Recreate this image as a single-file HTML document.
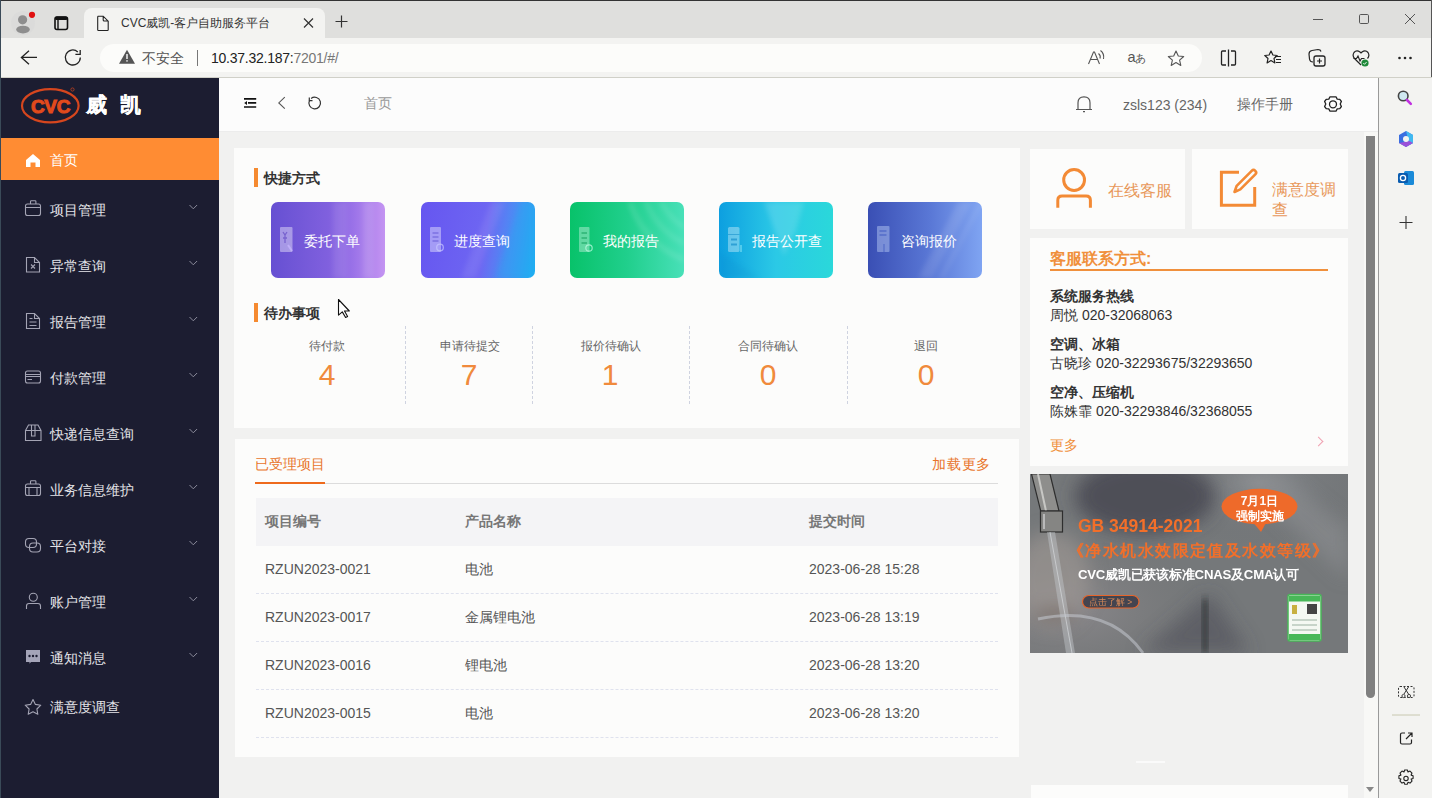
<!DOCTYPE html>
<html><head><meta charset="utf-8">
<style>
*{box-sizing:border-box;margin:0;padding:0}
html,body{width:1432px;height:798px;overflow:hidden;background:#f1f1f0;font-family:"Liberation Sans",sans-serif;color:#333}
.a{position:absolute}
#chrome{left:0;top:0;width:1432px;height:78px;background:#dfdfdd}
#toolbar{left:0;top:38px;width:1432px;height:40px;background:#f3f3f1}
#tab{left:84px;top:8px;width:241px;height:34px;background:#f3f3f1;border-radius:8px 8px 0 0}
#pill{left:100px;top:43.5px;width:1102px;height:28.5px;background:#fcfcfa;border-radius:14px}
#side{left:0;top:78px;width:219px;height:720px;background:#1c1d31}
#head{left:219px;top:78px;width:1159px;height:54px;background:#fcfcfc}
#bsb{left:1378px;top:78px;width:54px;height:720px;background:#f3f3f1;border-left:1px solid #9a9a9a}
.card{background:#fcfcfb}
.mi{left:0;width:219px;height:56px;color:#e4e4e8;font-size:14px}
.mi span.t{position:absolute;left:50px;top:50%;margin-top:-6px;line-height:16px}
.mi .chev{position:absolute;left:189px;top:50%;margin-top:-4px;width:7px;height:7px;border-right:1px solid #8a8a9a;border-bottom:1px solid #8a8a9a;transform:rotate(45deg)}
.btn{top:202px;width:114px;height:76px;border-radius:7px;color:#fff;font-size:14px;overflow:hidden}
.btn svg{position:absolute;left:8px;top:24px}
.btn svg.ov{left:0;top:0;filter:blur(2.5px)}
.btn span{position:absolute;left:33px;top:31px;line-height:16px;letter-spacing:0}
.todo .lb{position:absolute;top:338px;font-size:12px;color:#666;line-height:16px;transform:translateX(-50%);white-space:nowrap}
.todo .num{position:absolute;top:358px;font-size:30px;color:#f08a3c;line-height:34px;transform:translateX(-50%)}
.dash{top:326px;height:78px;width:0;border-left:1px dashed #cfd3e0}
.row{left:256px;width:742px;height:48px;font-size:14px;color:#555;border-bottom:1px dashed #dfe2ee}
.row span{position:absolute;top:15px;line-height:16px}
.ct{left:1050px;font-size:14px;line-height:16px}
</style></head><body>
<!-- browser chrome -->
<div id="chrome" class="a"></div>
<div id="toolbar" class="a"></div>
<div id="tab" class="a"></div>

<div id="pill" class="a"></div>
<svg class="a" style="left:0;top:0" width="1432" height="78" viewBox="0 0 1432 78">
 <rect x="0" y="0" width="1432" height="1" fill="#333"/>
 <rect x="1431" y="0" width="1" height="78" fill="#555"/>
 <circle cx="23" cy="23" r="12" fill="#d8d8d8" opacity=".6"/>
 <circle cx="22.6" cy="19.8" r="4.6" fill="#8e8e8e"/>
 <ellipse cx="23" cy="29.6" rx="6.8" ry="3.9" fill="#8e8e8e"/>
 <circle cx="32" cy="14.8" r="3.1" fill="#e01010"/>
 <rect x="55" y="17" width="12.5" height="12.5" rx="2" fill="none" stroke="#111" stroke-width="1.6"/>
 <rect x="55" y="16.5" width="12.5" height="3.5" rx="1.5" fill="#111"/>
 <line x1="58" y1="19" x2="58" y2="29.5" stroke="#111" stroke-width="1.4"/>
 <path d="M97.7 16.2h5.5l5 5v8.5q0 .8-.8.8h-8.9q-.8 0-.8-.8v-12.7q0-.8 .8-.8z M103.2 16.2v3.8q0 1 1 1h4" fill="none" stroke="#222" stroke-width="1.1"/>
 <path d="M304 18.5l9 9m0-9l-9 9" stroke="#333" stroke-width="1.2"/>
 <path d="M341.5 15.5v12m-6-6h12" stroke="#333" stroke-width="1.2"/>
 <path d="M1313 19.5h10" stroke="#555" stroke-width="1"/>
 <rect x="1359.5" y="14.5" width="9" height="9" rx="1.2" fill="none" stroke="#555" stroke-width="1"/>
 <path d="M1405 14l10 10m0-10l-10 10" stroke="#555" stroke-width="1"/>
 <path d="M29 50.8l-7.6 6.6 7.6 6.8M21.5 57.4h15.5" fill="none" stroke="#222" stroke-width="1.3"/>
 <path d="M80.3 57.5a7.5 7.5 0 1 1-2.5-5.6" fill="none" stroke="#222" stroke-width="1.3"/>
 <path d="M80.2 50v4.4h-4.8" fill="none" stroke="#222" stroke-width="1.3"/>
 <path d="M127 49.8l8 14h-16z" fill="#555"/>
 <rect x="126.3" y="54" width="1.4" height="5" fill="#fff"/><rect x="126.3" y="60.2" width="1.4" height="1.4" fill="#fff"/>
 <path d="M1088.5 64l5-12h1l5 12M1090.5 59.5h7" fill="none" stroke="#555" stroke-width="1.1"/>
 <path d="M1098.5 53.5q2.5 2 1.5 5M1100.5 50.5q4 3 3 8.5" fill="none" stroke="#555" stroke-width="1.1"/>
 <text x="1127.5" y="62.3" font-size="14.5" fill="#555" font-family="Liberation Sans">a</text>
 <text x="1134.5" y="62" font-size="11" fill="#555">あ</text>
 <path d="M1176 51l2.3 5 5.4.5-4.1 3.6 1.2 5.3-4.8-2.8-4.8 2.8 1.2-5.3-4.1-3.6 5.4-.5z" fill="none" stroke="#555" stroke-width="1.1" stroke-linejoin="round"/>
 <path d="M1226 51h-3.5q-1 0-1 1v12q0 1 1 1h3.5M1231 51h3.5q1 0 1 1v12q0 1-1 1h-3.5M1228.5 49.5v17" fill="none" stroke="#222" stroke-width="1.3"/>
 <path d="M1271 51l1.9 4 4.3.5-3.2 3 .9 4.4-3.9-2.3-3.9 2.3.9-4.4-3.2-3 4.3-.5z" fill="none" stroke="#222" stroke-width="1.2" stroke-linejoin="round"/>
 <path d="M1275 56.5h6M1276 59.5h5M1276 62.5h5" stroke="#222" stroke-width="1.2"/>
 <path d="M1313 62q-3 0-3.5-3l-.5-5q0-3 3-3.5l6-1q2.5 0 3 2" fill="none" stroke="#222" stroke-width="1.2"/>
 <rect x="1314" y="56" width="11" height="10" rx="2" fill="#f3f3f1" stroke="#222" stroke-width="1.3"/>
 <path d="M1319.5 58.5v5m-2.5-2.5h5" stroke="#222" stroke-width="1.2"/>
 <path d="M1361 65l-6.5-6.5q-2.5-3 -.5-6 2.5-3 6-.5l1 1 1-1q3.5-2.5 6 .5 2 3-.5 6" fill="none" stroke="#222" stroke-width="1.2"/>
 <path d="M1353.5 58.5h3l1.5-2.5 2 5 1.5-2.5h3" fill="none" stroke="#222" stroke-width="1.1"/>
 <circle cx="1365" cy="63" r="3.6" fill="#1f8a3a"/>
 <path d="M1363.3 63.1l1.2 1.2 2.1-2.3" fill="none" stroke="#fff" stroke-width=".9"/>
 <circle cx="1399.5" cy="58" r="1.3" fill="#222"/><circle cx="1405" cy="58" r="1.3" fill="#222"/><circle cx="1410.5" cy="58" r="1.3" fill="#222"/>
</svg>
<div class="a" style="left:96px;top:15px;font-size:12px;color:#333;left:121px;top:16px;line-height:14px">CVC威凯-客户自助服务平台</div>
<div class="a" style="left:142px;top:50px;font-size:14px;color:#555;line-height:16px">不安全</div>
<div class="a" style="left:197px;top:50px;width:1px;height:16px;background:#777"></div>
<div class="a" style="left:211px;top:50px;font-size:14px;color:#222;line-height:16px;letter-spacing:-.25px">10.37.32.187:<span style="color:#777">7201/#/</span></div>

<!-- sidebar -->
<div class="a" style="left:0;top:77px;width:1432px;height:1px;background:#d0d0c8"></div>
<div id="side" class="a"></div>
<div class="a" style="left:0;top:138px;width:219px;height:42px;background:#ff8c33"></div>
<svg class="a" style="left:0;top:78px" width="219" height="720" viewBox="0 78 219 720">
 <ellipse cx="50.3" cy="105.8" rx="28.3" ry="16.6" fill="none" stroke="#d6461e" stroke-width="2.2"/>
 <text x="50.5" y="112.6" font-family="Liberation Sans" font-weight="bold" font-size="19" fill="#e24a1c" stroke="#e24a1c" stroke-width="1" text-anchor="middle" letter-spacing="-0.3">CVC</text>
 <circle cx="72.5" cy="89.5" r="1.6" fill="none" stroke="#d6461e" stroke-width=".7"/>
 <g fill="#fff">
 <path d="M33 154l7 6v7h-4.5v-4.5h-5v4.5H26v-7z"/>
 </g>
 <g fill="none" stroke="#a4a4b4" stroke-width="1.1">
  <rect x="25.5" y="204" width="15" height="11.5" rx="2"/>
  <path d="M25.5 207.5h15M30.5 204v-2.5q0-.8.8-.8h3.8q.8 0 .8.8v2.5"/>
  <path d="M26.5 257.5h8l5 5v9.5h-13z M34.5 257.5v5h5"/>
  <path d="M31 264.5l4 4m0-4l-4 4"/>
  <path d="M26.5 313.5h8l5 5v10h-13z M34.5 313.5v5h5 M29.5 318.5h3 M29.5 322h7 M29.5 325.5h7"/>
  <rect x="25.5" y="371" width="15" height="12" rx="2"/>
  <path d="M25.5 374.5h15M25.5 376.5h15M27.5 379.5h4.5"/>
  <path d="M25.5 430.5l3-5.5h9.5l3 5.5v10h-15.5z M25.5 430.5h15.5 M31.5 425v11h3.5v-11"/>
  <rect x="25.5" y="204" width="15" height="11.5" rx="2" transform="translate(0,280)"/>
  <path d="M30.5 484v-2.5q0-.8.8-.8h3.8q.8 0 .8.8v2.5M25.5 487.5h15M29 487.5v8M37 487.5v8"/>
  <rect x="25.5" y="538.5" width="11" height="9" rx="3.5"/>
  <rect x="29.5" y="543" width="11" height="9" rx="3.5"/>
  <circle cx="33.3" cy="597.3" r="4"/>
  <path d="M26.5 609v-3q0-2.5 2.5-2.5h9q2.5 0 2.5 2.5v3"/>
  <path d="M33 699.5l2.4 4.9 5.4.8-3.9 3.8.9 5.3-4.8-2.5-4.8 2.5.9-5.3-3.9-3.8 5.4-.8z" stroke-linejoin="round"/>
 </g>
 <path d="M26 650h14v12h-9l-1.5 1.8v-1.8H26z" fill="#a4a4b8"/>
 <circle cx="29.5" cy="656" r="1.2" fill="#1c1d31"/><circle cx="33" cy="656" r="1.2" fill="#1c1d31"/><circle cx="36.5" cy="656" r="1.2" fill="#1c1d31"/>
</svg>
<div class="a" style="left:86px;top:93px;font-size:21px;font-weight:bold;color:#fff;line-height:24px;letter-spacing:13px;-webkit-text-stroke:.25px #fff">威凯</div>

<div class="a mi" style="top:138px;height:42px;color:#fff"><span class="t" style="margin-top:-7px">首页</span></div>
<div class="a mi" style="top:180px"><span class="t">项目管理</span></div>
<div class="a mi" style="top:236px"><span class="t">异常查询</span></div>
<div class="a mi" style="top:292px"><span class="t">报告管理</span></div>
<div class="a mi" style="top:348px"><span class="t">付款管理</span></div>
<div class="a mi" style="top:404px"><span class="t">快递信息查询</span></div>
<div class="a mi" style="top:460px"><span class="t">业务信息维护</span></div>
<div class="a mi" style="top:516px"><span class="t">平台对接</span></div>
<div class="a mi" style="top:572px"><span class="t">账户管理</span></div>
<div class="a mi" style="top:628px"><span class="t">通知消息</span></div>
<div class="a mi" style="top:684px;height:42px"><span class="t" style="margin-top:-6px">满意度调查</span></div>

<svg class="a" style="left:0;top:0" width="219" height="798" viewBox="0 0 219 798"><g fill="none" stroke="#8c8c9c" stroke-width="1"><path d="M189.5 205.0l3.8 3.8 3.8-3.8"/><path d="M189.5 261.0l3.8 3.8 3.8-3.8"/><path d="M189.5 317.0l3.8 3.8 3.8-3.8"/><path d="M189.5 373.0l3.8 3.8 3.8-3.8"/><path d="M189.5 429.0l3.8 3.8 3.8-3.8"/><path d="M189.5 485.0l3.8 3.8 3.8-3.8"/><path d="M189.5 541.0l3.8 3.8 3.8-3.8"/><path d="M189.5 597.0l3.8 3.8 3.8-3.8"/><path d="M189.5 653.0l3.8 3.8 3.8-3.8"/></g></svg>
<!-- header -->
<div id="head" class="a"></div>
<div class="a" style="left:364px;top:95px;font-size:14px;color:#999;line-height:16px">首页</div>
<div class="a" style="left:1123px;top:97px;font-size:14px;color:#666;line-height:16px">zsls123 (234)</div>
<div class="a" style="left:1237px;top:96px;font-size:14px;color:#666;line-height:16px">操作手册</div>

<svg class="a" style="left:219px;top:78px" width="1159" height="54" viewBox="219 78 1159 54">
 <path d="M244 98.8h12.2M248 102.9h8.2M244 107h12.2" stroke="#111" stroke-width="1.7"/>
 <path d="M247 100.9v4l-2.8-2z" fill="#111"/>
 <path d="M284.8 97.2l-6 5.7 6 5.7" fill="none" stroke="#555" stroke-width="1.1"/>
 <path d="M309.6 100.3a5.8 5.8 0 1 0 1.5-1.8" fill="none" stroke="#333" stroke-width="1.2"/>
 <path d="M309.3 97.5v3.2h3.2" fill="none" stroke="#333" stroke-width="1.2"/>
 <path d="M1078 109.3v-6.5q0-6 6-6t6 6v6.5M1076 109.5h16M1083 111.6h2" fill="none" stroke="#555" stroke-width="1.2"/>
 <path d="M1330 96.8h6l1.2 2.3 2.6.2 1.6 2.2-1.2 2.5 1.2 2.5-1.6 2.2-2.6.2-1.2 2.3h-6l-1.2-2.3-2.6-.2-1.6-2.2 1.2-2.5-1.2-2.5 1.6-2.2 2.6-.2z" fill="none" stroke="#222" stroke-width="1.3" stroke-linejoin="round"/>
 <circle cx="1333" cy="104.3" r="3.5" fill="none" stroke="#222" stroke-width="1.3"/>
 <rect x="219" y="131.5" width="1159" height="1" fill="#dcdcdc"/>
</svg>
<div id="bsb" class="a"></div>

<!-- top-left card -->
<div class="a card" style="left:234px;top:148px;width:786px;height:280px"></div>
<div class="a" style="left:254px;top:168px;width:4px;height:19px;background:#f58a30"></div>
<div class="a" style="left:264px;top:170px;font-size:14px;font-weight:bold;color:#333;line-height:16px">快捷方式</div>
<div class="a btn" style="left:271px;background:linear-gradient(90deg,#6650d2 0%,#8060de 50%,#9a72e8 72%,#c494f2 100%)"><svg class="ov" width="114" height="76"><rect x="62" y="0" width="14" height="76" fill="#fff" opacity=".07"/><rect x="92" y="0" width="10" height="76" fill="#fff" opacity=".1"/></svg><svg width="16" height="30" viewBox="0 0 16 30"><rect x="1" y="1" width="12.5" height="25" rx="1" fill="#fff" opacity=".4"/><path d="M4 6l2 3 2-3M6 9v8M4 12h4" stroke="#5a40c0" stroke-width="1.3" fill="none" opacity=".6"/><path d="M9 19l4 6" stroke="#c9b8ff" stroke-width="2" opacity=".7"/></svg><span>委托下单</span></div>
<div class="a btn" style="left:421px;background:linear-gradient(100deg,#6656f0 0%,#6e66f2 55%,#4a8ef4 76%,#1eb0f2 100%)"><svg class="ov" width="114" height="76"><path d="M70 0h14l-30 76h-14z" fill="#fff" opacity=".08"/><path d="M100 0h14v76h-40z" fill="#18b0f0" opacity=".25"/></svg><svg width="16" height="30" viewBox="0 0 16 30"><rect x="1" y="1" width="11" height="25" rx="1" fill="#fff" opacity=".4"/><path d="M3.5 7h6M3.5 11h6M3.5 15h6" stroke="#5548d0" stroke-width="1.4" opacity=".5"/><circle cx="11" cy="21.5" r="3.3" fill="none" stroke="#c8c8ff" stroke-width="1.3" opacity=".7"/></svg><span>进度查询</span></div>
<div class="a btn" style="left:570px;background:linear-gradient(90deg,#08c26a,#20cf8c 50%,#48e0b8)"><svg class="ov" width="114" height="76"><g fill="none" stroke="#fff"><circle cx="150" cy="-30" r="95" stroke-width="5" opacity=".12"/><circle cx="150" cy="-30" r="80" stroke-width="4" opacity=".12"/><circle cx="150" cy="-30" r="66" stroke-width="4" opacity=".12"/></g></svg><svg width="16" height="30" viewBox="0 0 16 30"><rect x="1" y="1" width="10.5" height="25" rx="1" fill="#fff" opacity=".35"/><path d="M3.5 7h5.5M3.5 12h5.5M3.5 17h5.5" stroke="#0a9a55" stroke-width="1.6" opacity=".6"/><circle cx="11" cy="22" r="3.2" fill="none" stroke="#c8ffe8" stroke-width="1.2" opacity=".7"/></svg><span>我的报告</span></div>
<div class="a btn" style="left:719px;background:linear-gradient(90deg,#0d9fe0,#2bc9e6 50%,#2ad8da)"><svg class="ov" width="114" height="76"><path d="M45 0h40l-8 28-12 26z" fill="#fff" opacity=".14"/><path d="M0 50l40 26h-40z" fill="#0a80c0" opacity=".15"/></svg><svg width="16" height="30" viewBox="0 0 16 30"><rect x="1" y="1" width="11.5" height="25" rx="1.5" fill="#fff" opacity=".35"/><path d="M4 13.5h6M4 18.5h6" stroke="#0a88c8" stroke-width="1.8" opacity=".6"/><path d="M1 8.5h11.5" stroke="#0a88c8" stroke-width="1" opacity=".5"/><path d="M14 19v7" stroke="#bff" stroke-width="1" opacity=".7"/></svg><span>报告公开查</span></div>
<div class="a btn" style="left:868px;background:linear-gradient(90deg,#3a4fb4,#5a78d6 55%,#7fa4f2)"><svg class="ov" width="114" height="76"><path d="M50 76l40-76h14l-40 76z" fill="#fff" opacity=".1"/><path d="M70 76l40-76h6l-40 76z" fill="#fff" opacity=".08"/></svg><svg width="16" height="30" viewBox="0 0 16 30"><rect x="1" y="0" width="12.5" height="26" rx="1" fill="#cfe0ff" opacity=".4"/><path d="M3.5 5h7M3.5 9h7" stroke="#3a55c0" stroke-width="1.4" opacity=".6"/><path d="M8 18v8" stroke="#3a55c0" stroke-width="1.2" opacity=".6"/></svg><span>咨询报价</span></div>
<div class="a" style="left:254px;top:303px;width:4px;height:19px;background:#f58a30"></div>
<div class="a" style="left:264px;top:305px;font-size:14px;font-weight:bold;color:#333;line-height:16px">待办事项</div>
<svg class="a" style="left:330px;top:292px" width="26" height="30" viewBox="330 292 26 30"><path d="M338.5 299.5v15.6l3.8-3.2 3.3 5.6 2-1-3.1-5.5h4.8z" fill="#fff" stroke="#111" stroke-width="1.1" stroke-linejoin="round"/></svg>
<div class="todo">
<div class="lb" style="left:327px">待付款</div><div class="num" style="left:327px">4</div>
<div class="lb" style="left:470px">申请待提交</div><div class="num" style="left:469px">7</div>
<div class="lb" style="left:611px">报价待确认</div><div class="num" style="left:610px">1</div>
<div class="lb" style="left:768px">合同待确认</div><div class="num" style="left:768px">0</div>
<div class="lb" style="left:926px">退回</div><div class="num" style="left:926px">0</div>
</div>
<div class="a dash" style="left:405px"></div>
<div class="a dash" style="left:532px"></div>
<div class="a dash" style="left:689px"></div>
<div class="a dash" style="left:847px"></div>

<!-- table card -->
<div class="a card" style="left:235px;top:439px;width:784px;height:318px"></div>
<div class="a" style="left:255px;top:456px;font-size:14px;color:#e8742a;line-height:16px">已受理项目</div>
<div class="a" style="left:932px;top:456px;font-size:14px;color:#e8742a;line-height:16px;letter-spacing:.8px">加载更多</div>
<div class="a" style="left:255px;top:483px;width:743px;height:1px;background:#dcdcdc"></div>
<div class="a" style="left:255px;top:482px;width:70px;height:2px;background:#ee6a1c"></div>
<div class="a" style="left:256px;top:498px;width:742px;height:48px;background:#f4f4f6"></div>
<div class="a" style="left:265px;top:513px;font-size:14px;font-weight:bold;color:#777;line-height:16px">项目编号</div>
<div class="a" style="left:465px;top:513px;font-size:14px;font-weight:bold;color:#777;line-height:16px">产品名称</div>
<div class="a" style="left:809px;top:513px;font-size:14px;font-weight:bold;color:#777;line-height:16px">提交时间</div>
<div class="a row" style="top:546px"><span style="left:9px">RZUN2023-0021</span><span style="left:209px">电池</span><span style="left:553px">2023-06-28 15:28</span></div>
<div class="a row" style="top:594px"><span style="left:9px">RZUN2023-0017</span><span style="left:209px">金属锂电池</span><span style="left:553px">2023-06-28 13:19</span></div>
<div class="a row" style="top:642px"><span style="left:9px">RZUN2023-0016</span><span style="left:209px">锂电池</span><span style="left:553px">2023-06-28 13:20</span></div>
<div class="a row" style="top:690px"><span style="left:9px">RZUN2023-0015</span><span style="left:209px">电池</span><span style="left:553px">2023-06-28 13:20</span></div>

<!-- right column -->
<div class="a card" style="left:1030px;top:149px;width:155px;height:80px"></div>
<div class="a card" style="left:1192px;top:149px;width:156px;height:80px"></div>

<svg class="a" style="left:1030px;top:149px" width="318" height="80" viewBox="1030 149 318 80">
 <circle cx="1074.1" cy="180" r="10.4" fill="none" stroke="#f38a35" stroke-width="3"/>
 <path d="M1057.8 207.7v-7.5q0-4.3 4.3-4.3h24q4.3 0 4.3 4.3v7.5" fill="none" stroke="#f38a35" stroke-width="3"/>
 <path d="M1239 172.3h-17.6v33h33.3v-18.3" fill="none" stroke="#f38a35" stroke-width="3"/>
 <path d="M1234.5 192l2.2-6.2 15-15q1.8-1.8 3.6 0t0 3.6l-15 15z" fill="none" stroke="#f38a35" stroke-width="2.6" stroke-linejoin="round"/>
</svg>
<div class="a" style="left:1108px;top:182px;font-size:16px;color:#e8985a;line-height:18px">在线客服</div>
<div class="a" style="left:1272px;top:180px;width:70px;font-size:16px;color:#e8985a;line-height:20px">满意度调查</div>
<div class="a card" style="left:1030px;top:238px;width:318px;height:228px"></div>
<div class="a" style="left:1050px;top:250px;font-size:16px;font-weight:bold;color:#f0903c;line-height:18px">客服联系方式:</div>
<div class="a" style="left:1050px;top:269px;width:278px;height:2px;background:#f0903c"></div>
<div class="a ct" style="top:288px;font-weight:bold">系统服务热线</div>
<div class="a ct" style="top:307px">周悦 020-32068063</div>
<div class="a ct" style="top:336px;font-weight:bold">空调、冰箱</div>
<div class="a ct" style="top:355px">古晓珍 020-32293675/32293650</div>
<div class="a ct" style="top:384px;font-weight:bold">空净、压缩机</div>
<div class="a ct" style="top:403px">陈姝霏 020-32293846/32368055</div>
<div class="a ct" style="top:437px;color:#f0903c">更多</div>
<div class="a" style="left:1315px;top:438px;width:7px;height:7px;border-right:1px solid #f0a0b0;border-top:1px solid #f0a0b0;transform:rotate(45deg)"></div>

<svg class="a" style="left:1030px;top:474px" width="318" height="179" viewBox="0 0 318 179">
 <defs>
  <radialGradient id="g1" cx="0.72" cy="0.05" r="0.35"><stop offset="0" stop-color="#8a8d90"/><stop offset="1" stop-color="#6b6e72" stop-opacity="0"/></radialGradient>
  <radialGradient id="g2" cx="0.12" cy="0.75" r="0.45"><stop offset="0" stop-color="#8c8a8e"/><stop offset="1" stop-color="#777" stop-opacity="0"/></radialGradient>
  <linearGradient id="fa" x1="0" x2="1"><stop offset="0" stop-color="#5a5a58"/><stop offset=".4" stop-color="#cfcfcb"/><stop offset="1" stop-color="#6a6a68"/></linearGradient>
  <filter id="bl"><feGaussianBlur stdDeviation="3"/></filter>
 </defs>
 <rect width="318" height="179" fill="#75787a"/>
 <rect width="318" height="179" fill="url(#g1)"/>
 <rect width="318" height="179" fill="url(#g2)"/>
 <filter id="bl2" x="-50%" y="-50%" width="200%" height="200%"><feGaussianBlur stdDeviation="9"/></filter>
 <g filter="url(#bl2)">
  <ellipse cx="115" cy="22" rx="70" ry="38" fill="#45454f" opacity=".8"/>
  <path d="M205 0h45l68 55v50z" fill="#8e9094" opacity=".55"/>
  <ellipse cx="22" cy="105" rx="38" ry="48" fill="#a09a94" opacity=".6"/>
  <path d="M110 179l70-60 40 60z" fill="#4a4c55" opacity=".55"/>
  <ellipse cx="25" cy="140" rx="22" ry="6" fill="#5a4a40" opacity=".6"/>
 </g>
 <g filter="url(#bl)">
  <rect x="172" y="125" width="6" height="54" fill="#2a2c30" opacity=".7"/>
 </g>
 <path d="M1.5 0H20l9 37H10.7z" fill="#8e8e8c" stroke="#2e2e2e" stroke-width="1.2"/>
 <path d="M8 0l8 37" stroke="#e0e0dc" stroke-width="2" opacity=".7"/>
 <rect x="10.5" y="37" width="22" height="21" fill="#858583" stroke="#2e2e2e" stroke-width="1.2"/>
 <path d="M14 40v15" stroke="#ddd" stroke-width="2" opacity=".6"/>
 <path d="M17 58h8l20 121h-9z" fill="#c4c8cc" opacity=".45"/>
 <path d="M20 58l22 121" stroke="#dde0e4" stroke-width="1" opacity=".6"/>
 <path d="M8 145q70 -15 105 34" fill="none" stroke="#c4c8d0" stroke-width="3" opacity=".55"/>
 <ellipse cx="229.5" cy="32.6" rx="38" ry="17.8" fill="#ee6a2a"/>
 <path d="M222 47l9 11 6-11z" fill="#ee6a2a"/>
 <text x="229.5" y="30.5" font-size="12" font-weight="bold" fill="#fff" text-anchor="middle">7月1日</text>
 <text x="229.5" y="45.5" font-size="12" font-weight="bold" fill="#fff" text-anchor="middle">强制实施</text>
 <text x="48" y="57.5" font-size="17.5" font-weight="bold" fill="#f26f2a" font-family="Liberation Sans">GB 34914-2021</text>
 <text x="38" y="82" font-size="16.4" font-weight="bold" fill="#f26f2a" textLength="260">《净水机水效限定值及水效等级》</text>
 <text x="48" y="104.5" font-size="13.2" font-weight="bold" fill="#fff" textLength="221">CVC威凯已获该标准CNAS及CMA认可</text>
 <rect x="52.5" y="121.5" width="56.5" height="12.5" rx="6.25" fill="#44444f" stroke="#e8652a" stroke-width="1.2"/>
 <text x="80.5" y="131" font-size="8.5" fill="#d88a58" text-anchor="middle">点击了解 &gt;</text>
 <rect x="258" y="120.5" width="33" height="46.5" rx="2" fill="#f4f8f2" stroke="#48b858" stroke-width="1.5"/>
 <rect x="259" y="121.5" width="31" height="6" fill="#48b858"/>
 <rect x="277" y="130" width="10" height="10" fill="#444"/>
 <rect x="262" y="131" width="5" height="9" fill="#c8b040"/>
 <path d="M262 146h25M262 151h25M262 156h25" stroke="#9ab0a0" stroke-width="1"/>
 <rect x="259" y="160" width="31" height="6" fill="#48b858"/>
</svg>

<div class="a card" style="left:1031px;top:785px;width:317px;height:13px"></div>
<div class="a" style="left:1364px;top:132px;width:14px;height:666px;background:#f8f8f6"></div>
<div class="a" style="left:1366px;top:136px;width:9px;height:562px;background:#808080;border-radius:0 0 4.5px 4.5px"></div>

<svg class="a" style="left:1378px;top:78px" width="54" height="720" viewBox="1378 78 54 720">
 <circle cx="1403.2" cy="96" r="4.8" fill="#cfe8f0" stroke="#444" stroke-width="1.6"/>
 <path d="M1407 100l3.8 3.8" stroke="#c030e0" stroke-width="2.6" stroke-linecap="round"/>
 <path d="M1406 131l7 4v8l-7 4-7-4v-8z" fill="#3a6ee0"/>
 <path d="M1406 131l7 4v8l-3.5 2z" fill="#40b8f0"/>
 <path d="M1399 143l7 4 7-4-3.5-2z" fill="#9a50d8"/>
 <circle cx="1406" cy="139" r="3" fill="#f3f3f1"/>
 <rect x="1404" y="171" width="10" height="14" rx="1.5" fill="#1a8ad8"/>
 <rect x="1398" y="173" width="10" height="10" rx="1.5" fill="#0a5cb0"/>
 <circle cx="1403" cy="178" r="2.6" fill="none" stroke="#fff" stroke-width="1.3"/>
 <path d="M1406 216v13M1399.5 222.5h13" stroke="#333" stroke-width="1.1"/>
 <rect x="1398.5" y="686.5" width="15.5" height="11" rx="1.5" fill="none" stroke="#333" stroke-width="1" stroke-dasharray="2 1.5"/>
 <path d="M1404 687l4.5 7M1408.5 687l-4.5 7" stroke="#333" stroke-width="1"/>
 <circle cx="1403.5" cy="696" r="1.6" fill="#f3f3f1" stroke="#333" stroke-width=".9"/><circle cx="1409" cy="696" r="1.6" fill="#f3f3f1" stroke="#333" stroke-width=".9"/>
 <path d="M1392 715h28" stroke="#c8c8b0" stroke-width="1"/>
 <path d="M1405 733h-3q-1.5 0-1.5 1.5v8q0 1.5 1.5 1.5h8q1.5 0 1.5-1.5v-3M1406 739l6-6M1408 733h4v4" fill="none" stroke="#222" stroke-width="1.2"/>
 <path d="M1404.6 770h2.8l.6 2 2-.9 2 2-.9 2 2 .6v2.8l-2 .6.9 2-2 2-2-.9-.6 2h-2.8l-.6-2-2 .9-2-2 .9-2-2-.6v-2.8l2-.6-.9-2 2-2 2 .9z" fill="none" stroke="#222" stroke-width="1.1" stroke-linejoin="round"/>
 <circle cx="1406" cy="778.4" r="2.2" fill="none" stroke="#222" stroke-width="1.1"/>
</svg>
<div class="a" style="left:1366px;top:787px;width:0;height:0;border-left:4.5px solid transparent;border-right:4.5px solid transparent;border-top:5px solid #888"></div>
<div class="a" style="left:1136px;top:761px;width:29px;height:2px;background:#fafafa"></div>
<div class="a" style="left:0;top:0;width:1px;height:798px;background:#3a4a58"></div>
</body></html>
